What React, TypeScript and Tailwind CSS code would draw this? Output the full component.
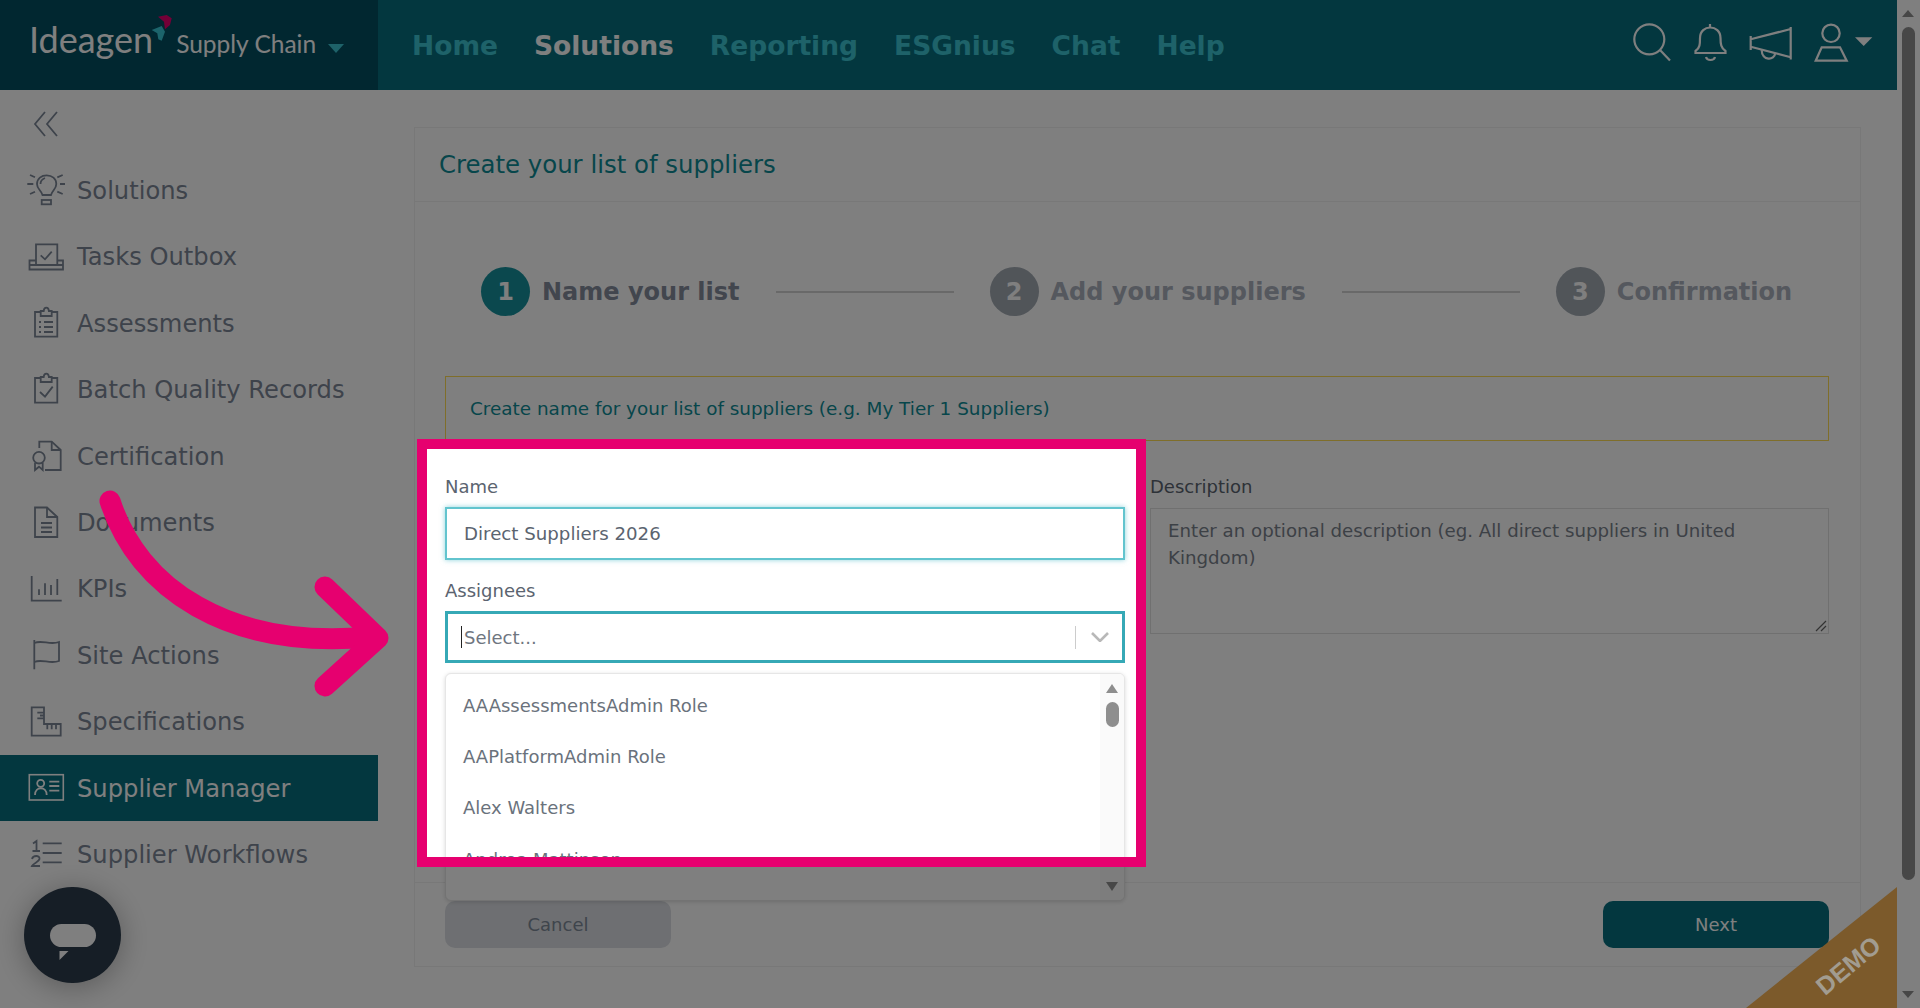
import type { ReactNode } from "react";

const navItems = ["Home", "Solutions", "Reporting", "ESGnius", "Chat", "Help"];

function Icon({ children }: { children: ReactNode }) {
  return (
    <svg
      viewBox="0 0 36 36"
      className="h-[36px] w-[36px] shrink-0 overflow-visible"
      fill="none"
      stroke="currentColor"
      strokeWidth="1.8"
    >
      {children}
    </svg>
  );
}

const clipboard = (
  <>
    <path d="M12.700 7H7v24.600h22.300V7h-5.600" />
    <path d="M12.700 11V6h3c.4-4.500 4.800-4.500 5.200 0h2.800v5z" />
  </>
);

const sideItems: { label: string; icon: ReactNode }[] = [
  {
    label: "Solutions",
    icon: (
      <>
        <path d="M14.500 23C13 18 9 17 9 12 9 6.500 13.500 3.300 18.700 3.300 24 3.300 28.300 6.500 28.300 12c0 5-3.800 6-5.300 11z" />
        <path d="M12.500 12c0-3 2-5 4.500-6" />
        <rect x="13.700" y="28" width="9.300" height="4.300" />
        <path d="M-.7 12h6M32 12h5M2 3l5 2.300M29.300 5.300L34.700 3M2 22l5-2.300M29.300 19.700l5.400 2.300" />
      </>
    ),
  },
  {
    label: "Tasks Outbox",
    icon: (
      <>
        <path d="M8 5.300h21.300V26H8z" />
        <path d="M12.700 16.300l4.300 4 6.700-7.600" />
        <path d="M8 21.500H1.500v9H35v-9h-5.700M1.500 26H35" />
      </>
    ),
  },
  {
    label: "Assessments",
    icon: (
      <>
        {clipboard}
        <path d="M11 17h2M16 17h9M11 22h2M16 22h9M11 27h2M16 27h9" />
      </>
    ),
  },
  {
    label: "Batch Quality Records",
    icon: (
      <>
        {clipboard}
        <path d="M12 21l5 4.600 7.700-10" />
      </>
    ),
  },
  {
    label: "Certification",
    icon: (
      <>
        <path d="M11.300 10V3.700h12.400l9 8.300v20H17" />
        <path d="M23.700 3.700V12h9" />
        <circle cx="11" cy="19.700" r="5.800" />
        <path d="M7 25v7l4-3.300 3.700 3.300v-7" />
      </>
    ),
  },
  {
    label: "Documents",
    icon: (
      <>
        <path d="M7 3.500h12L29.300 13v20H7z" />
        <path d="M19 3.500V13h10.300M13 19h11M13 23.500h11M13 28h11" />
      </>
    ),
  },
  {
    label: "KPIs",
    icon: (
      <>
        <path d="M3.700 5v24.700h30" />
        <path d="M11 18.300V24M17 12.300V24M23 14V24M29.300 8v16" />
      </>
    ),
  },
  {
    label: "Site Actions",
    icon: (
      <>
        <path d="M6.300 3v29.300" />
        <path d="M6.300 6C14 2.500 22 8.500 31 5v19c-9 3.500-17-2.500-24.700 1" />
      </>
    ),
  },
  {
    label: "Specifications",
    icon: (
      <>
        <path d="M3.700 4.300H16V21h16.700v11.700h-29z" />
        <path d="M9.300 9.700H16M12 12.500h4M9.300 15.300H16M19.300 21v5.300M23.700 21v5.300M28 21v5.300" />
      </>
    ),
  },
  {
    label: "Supplier Manager",
    icon: (
      <>
        <rect x="1.300" y="4.700" width="34" height="25.300" strokeWidth="1.6" />
        <circle cx="12.700" cy="13.300" r="3.500" />
        <path d="M7 25c0-9 11.700-9 11.700 0M21.300 11.700h10M21.300 16h10M21.300 20.700h10" />
      </>
    ),
  },
  {
    label: "Supplier Workflows",
    icon: (
      <>
        <path d="M14.700 7.300h19M14.700 17h19M14.700 26.300h19" />
        <path d="M5 7.500l3.500-2.500v10M4.500 15h7.500" />
        <path d="M4 23c1-4 8-4 7.500 0-.5 3-6 4-7.500 7h8" />
      </>
    ),
  },
];

function Header() {
  return (
    <header className="flex h-[90px] shrink-0 items-center bg-[#066f7f]">
      <div className="relative flex h-full w-[378px] shrink-0 items-center bg-[#024e60] pl-[29px] text-white [font-family:'Lato',sans-serif]">
        <div className="mb-[12px] flex items-baseline">
          <span className="text-[36px] font-normal leading-none">Ideagen</span>
          <span className="ml-[23px] text-[24.500px] font-normal leading-none">Supply Chain</span>
          <span className="mb-[3px] ml-[12px] h-0 w-0 border-x-[8.500px] border-t-[9px] border-x-transparent border-t-[#3cc4d2]" />
        </div>
        <svg viewBox="150 13 24 30" className="absolute left-[150px] top-[13px] h-[30px] w-[24px]">
          <path d="M158 16.700l8.700-1.700 5 3.300-1.700 6.700-5 4.300-1-7.600z" fill="#e6006f" />
          <path d="M151.700 30l10-4 3.300 5.700-3.300 9-3.400-1.400-1-6z" fill="#38c8d6" />
        </svg>
      </div>
      <nav className="mt-[2px] flex flex-1 items-center gap-[36px] pl-[34px] text-[26.500px] font-bold text-[#3cc4d2]">
        {navItems.map((n) => (
          <span key={n} className={n === "Solutions" ? "text-white" : ""}>
            {n}
          </span>
        ))}
      </nav>
      <svg viewBox="0 0 250 60" className="mr-[17px] h-[60px] w-[250px]" fill="none" stroke="#ffffff" strokeWidth="2.2">
        <circle cx="19.300" cy="24.300" r="15" />
        <path d="M30 35l10 10.500" />
        <path d="M65.500 38h30v-2c-4.500-3-5-7-5-13 0-14-20.500-14-20.500 0 0 6 0 10-4.500 13z" />
        <path d="M80 9v3.500M76 42c1 4 8 4 9 0" />
        <path d="M120.700 21v14M120.700 24.300L160.700 14M160.700 12v32.500M120.700 31.700l40 10.600" />
        <path d="M131.700 35c0 11 13 11 13.500 3" />
        <circle cx="201" cy="18.300" r="8.700" />
        <path d="M191.700 32.300H210l6.700 13.400h-31z" />
        <path d="M225 22.300h17.300l-8.600 8.700z" fill="#ffffff" stroke="none" />
      </svg>
    </header>
  );
}

function Sidebar() {
  return (
    <aside className="relative flex w-[378px] shrink-0 flex-col bg-white text-[24.200px] text-[#7c8797]">
      <div className="flex h-[67px] shrink-0 items-center pl-[33px]">
        <svg viewBox="0 0 26 26" className="h-[26px] w-[26px]" fill="none" stroke="currentColor" strokeWidth="1.8">
          <path d="M12 1L2 13l10 12M24 1L14 13l10 12" />
        </svg>
      </div>
      {sideItems.map((item) => (
        <div
          key={item.label}
          className={
            "flex h-[66.400px] shrink-0 items-center gap-[13px] pl-[28px] " +
            (item.label === "Supplier Manager" ? "bg-[#066f7f] text-white" : "")
          }
        >
          <Icon>{item.icon}</Icon>
          <span className="mt-[2px]">{item.label}</span>
        </div>
      ))}
      <div className="absolute left-[24px] top-[797px] flex h-[96px] w-[97px] items-center justify-center rounded-full bg-[#2c3c4c] shadow-[0_4px_30px_rgba(0,0,0,0.3)]">
        <div className="relative h-[23px] w-[46px] rounded-full bg-white">
          <svg viewBox="0 0 10 10" className="absolute left-[9px] top-[27px] h-[9px] w-[10px]" fill="#ffffff">
            <path d="M0 0h10L0 10z" />
          </svg>
        </div>
      </div>
    </aside>
  );
}

function Step({ n, label, active }: { n: number; label: string; active?: boolean }) {
  return (
    <div className="flex shrink-0 items-center gap-[12px]">
      <div
        className={
          "flex h-[49px] w-[49px] items-center justify-center rounded-full text-[24px] font-bold text-white " +
          (active ? "bg-[#16919c]" : "bg-[#a2aab3]")
        }
      >
        {n}
      </div>
      <span className={"text-[24px] font-bold " + (active ? "text-[#848c9c]" : "text-[#aab0bc]")}>{label}</span>
    </div>
  );
}

function Main() {
  return (
    <main className="flex min-w-0 flex-1 flex-col bg-white pb-[41px] pl-[36px] pr-[36px] pt-[37px]">
      <div className="flex flex-1 flex-col border border-[#f0f0f0]">
        <div className="flex h-[74px] shrink-0 items-center border-b border-[#f0f0f0] pl-[24px] pt-[2px] text-[24.400px] text-[#0e8c96]">
          Create your list of suppliers
        </div>
        <div className="flex-1 pl-[30px] pr-[31px] pt-[65px]">
          <div className="flex h-[49px] items-center gap-[36px] pl-[36px]">
            <Step n={1} label="Name your list" active />
            <div className="h-[2px] w-[178px] bg-[#d2d2d2]" />
            <Step n={2} label="Add your suppliers" />
            <div className="h-[2px] w-[178px] bg-[#d2d2d2]" />
            <Step n={3} label="Confirmation" />
          </div>
          <div className="mt-[60px] flex h-[65px] items-center border border-[#ffdd55] pl-[24px] text-[18.400px] text-[#0e8c96]">
            Create name for your list of suppliers (e.g. My Tier 1 Suppliers)
          </div>
          <div className="mt-[33px] grid grid-cols-[680px_679px] gap-x-[25px] text-[18px] text-[#5b6470]">
            <div>
              <div className="h-[24px] leading-[26px]">Name</div>
              <div className="mt-[9px] flex h-[53px] items-center border-2 border-[#62c4ce] bg-white pl-[17px] text-[18.200px] shadow-[0_0_5px_rgba(60,180,195,0.6)]">
                Direct Suppliers 2026
              </div>
              <div className="mt-[18px] h-[24px] leading-[26px]">Assignees</div>
              <div className="relative mt-[9px]">
                <div className="flex h-[52px] items-center border-[3px] border-[#36a9b6] pl-[13px]">
                  <span className="h-[22px] w-px bg-[#222]" />
                  <span className="ml-[2px] text-[#6f7680]">Select...</span>
                  <span className="ml-auto h-[23px] w-px bg-[#ccc]" />
                  <svg viewBox="0 0 18 10" className="ml-[15px] mr-[13px] h-[10px] w-[18px]" fill="none" stroke="#b8b8b8" strokeWidth="2.6">
                    <path d="M1 1l8 8 8-8" />
                  </svg>
                </div>
                <div className="absolute left-0 top-[62px] z-10 flex h-[228px] w-full overflow-hidden rounded-[6px] border border-[#e6e6e6] bg-white shadow-[0_1px_4px_rgba(0,0,0,0.15)]">
                  <div className="flex-1 pl-[17px] pt-[6px] text-[#6a727c]">
                    {["AAAssessmentsAdmin Role", "AAPlatformAdmin Role", "Alex Walters", "Andrea Mattinson"].map((o) => (
                      <div key={o} className="flex h-[51.200px] items-center">
                        {o}
                      </div>
                    ))}
                  </div>
                  <div className="relative w-[24px] bg-[#fafafa]">
                    <div className="absolute left-[6px] top-[10px] h-0 w-0 border-x-[6px] border-b-[9px] border-x-transparent border-b-[#8e8e8e]" />
                    <div className="absolute left-[6px] top-[28px] h-[25px] w-[13px] rounded-full bg-[#8e8e8e]" />
                    <div className="absolute bottom-[9px] left-[6px] h-0 w-0 border-x-[6px] border-t-[9px] border-x-transparent border-t-[#8e8e8e]" />
                  </div>
                </div>
              </div>
            </div>
            <div>
              <div className="h-[24px] leading-[26px]">Description</div>
              <div className="relative mt-[10px] h-[126px] border border-[#e0e0e0] px-[17px] pt-[8px] text-[18.200px] leading-[27px] text-[#7a828c]">
                Enter an optional description (eg. All direct suppliers in United Kingdom)
                <svg viewBox="0 0 12 12" className="absolute bottom-[1px] right-[1px] h-[12px] w-[12px]" stroke="#666" strokeWidth="1.2">
                  <path d="M1 11L11 1M6 11l5-5" />
                </svg>
              </div>
            </div>
          </div>
        </div>
        <div className="flex h-[84px] shrink-0 items-start justify-between border-t border-[#f0f0f0] pl-[30px] pr-[31px] pt-[18px] text-[18px]">
          <div className="flex h-[47px] w-[226px] items-center justify-center rounded-[10px] bg-[#dcdfe4] text-[#7f8a99]">Cancel</div>
          <div className="flex h-[47px] w-[226px] items-center justify-center rounded-[10px] bg-[#066f7f] text-white">Next</div>
        </div>
      </div>
    </main>
  );
}

function PageScrollbar() {
  return (
    <div className="relative w-[23px] shrink-0 bg-white">
      <div className="absolute left-[5px] top-[10px] h-0 w-0 border-x-[6px] border-b-[7px] border-x-transparent border-b-[#8e8e8e]" />
      <div className="absolute left-[5px] top-[27px] h-[853px] w-[13px] rounded-full bg-[#8e8e8e]" />
      <div className="absolute bottom-[10px] left-[5px] h-0 w-0 border-x-[6px] border-t-[7px] border-x-transparent border-t-[#8e8e8e]" />
    </div>
  );
}

export default function App() {
  return (
    <div className="relative flex h-screen w-full overflow-hidden [font-family:'DejaVu_Sans',sans-serif]">
      <div className="flex min-w-0 flex-1 flex-col">
        <Header />
        <div className="flex min-h-0 flex-1">
          <Sidebar />
          <Main />
        </div>
      </div>
      <PageScrollbar />
      {/* tour highlight */}
      <div className="absolute left-[417px] top-[439px] z-30 h-[428px] w-[729px] border-[10px] border-[#e6006f] shadow-[0_0_0_3000px_rgba(0,0,0,0.5)]" />
      {/* demo ribbon, sits on top of the dim */}
      <div className="absolute bottom-0 right-[23px] z-40 h-[121px] w-[151px] bg-[#7c5a2b] [clip-path:polygon(100%_0,100%_100%,0_100%)]">
        <span className="absolute bottom-[24px] right-[11px] rotate-[-40deg] text-[25px] font-bold text-[#a29c90] [font-family:'Liberation_Sans',sans-serif]">
          DEMO
        </span>
      </div>
      <svg viewBox="0 0 400 220" className="absolute left-0 top-[480px] z-40 h-[220px] w-[400px]" fill="none" stroke="#e6006f" strokeWidth="21" strokeLinecap="round" strokeLinejoin="round">
        <path d="M110 21C138 108 228 170 370 157" />
        <path d="M325 107l53 51-53 48" />
      </svg>
    </div>
  );
}
